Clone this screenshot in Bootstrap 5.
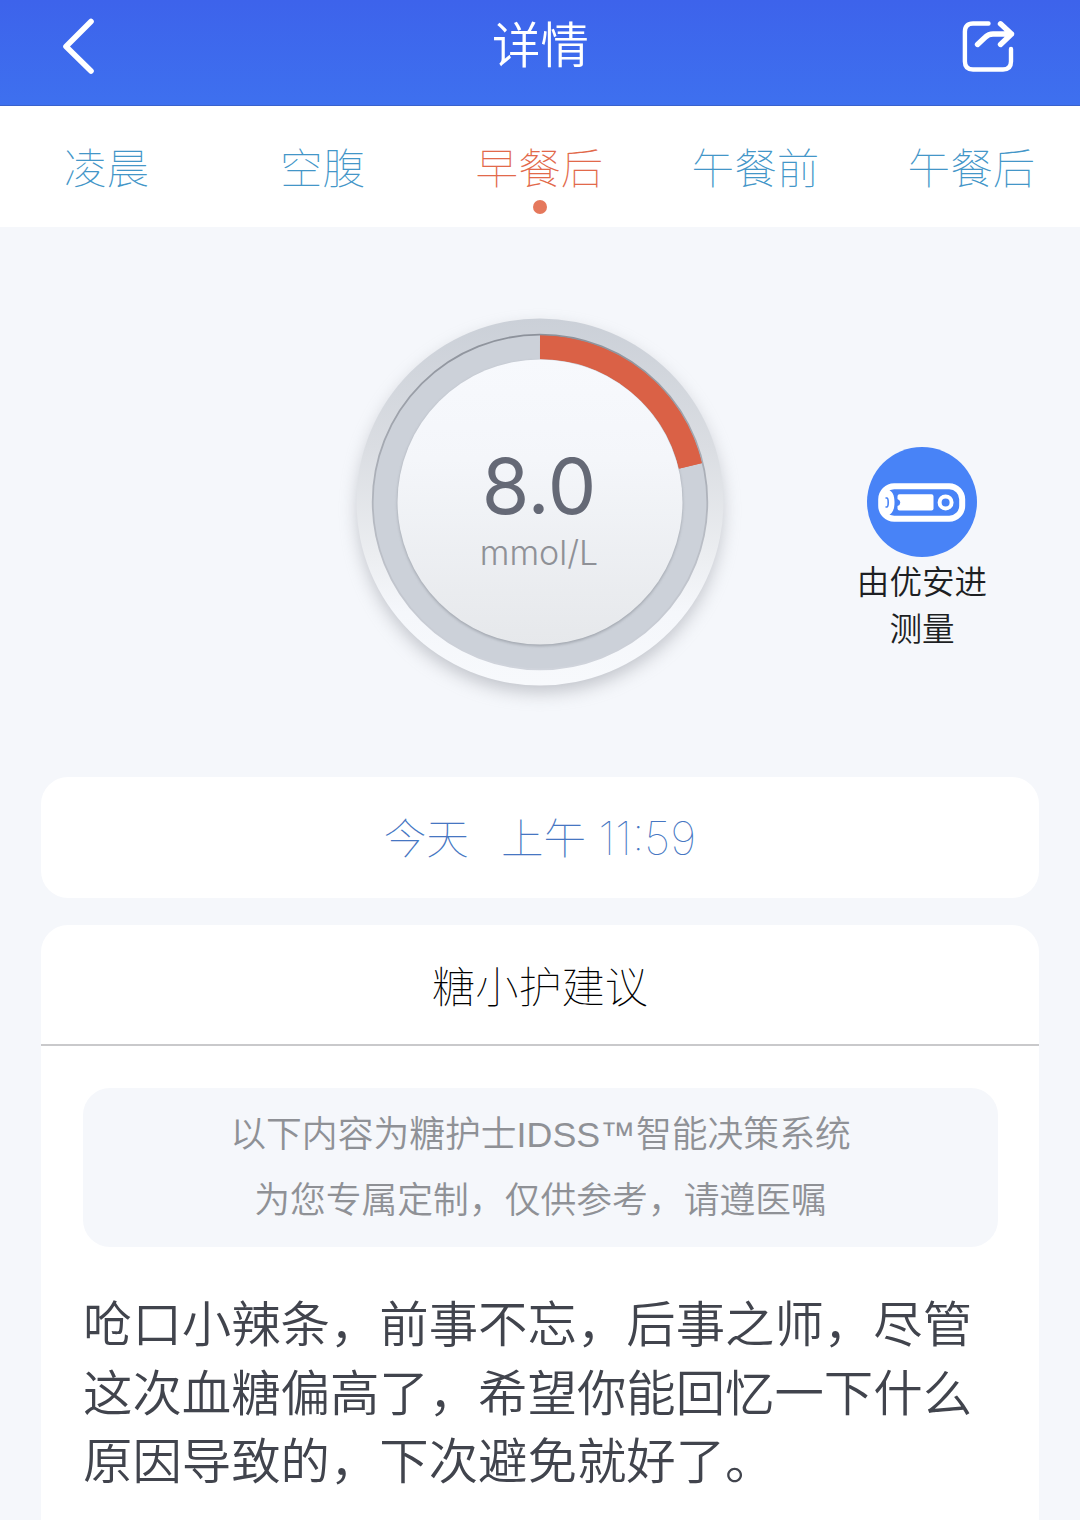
<!DOCTYPE html>
<html lang="zh-CN">
<head>
<meta charset="utf-8">
<meta name="viewport" content="width=device-width, initial-scale=1">
<title>详情</title>
<link rel="stylesheet" href="https://cdn.jsdelivr.net/npm/bootstrap@5.3.0/dist/css/bootstrap.min.css">
<style>
  body { background: #f5f7fb; font-family: Inter, "Noto Sans CJK SC", sans-serif; height: 1520px; overflow: hidden; }
  .topbar { height: 106px; padding: 0 64px 14px 62px; background: linear-gradient(#3d63eb, #3e70ef); border-bottom: 1px solid #3a62cc; }
  .topbar h1 { font-size: 48.4px; font-weight: 350; line-height: 60px; padding-left: 7px; margin-top: 1px; }
  .topbar svg { display: block; }
  .periods { height: 121px; }
  .periods a { width: 216px; height: 121px; padding: 32px 1px 0 0; font-size: 42.6px; line-height: 62px; font-weight: 100; color: #4396c8; text-decoration: none; white-space: nowrap; }
  .periods .short { padding-right: 3px; }
  .periods a.current { color: #e2694a; }
  .periods a.current::after { content: ""; width: 14px; height: 14px; margin: 0 -1px 0 0; border-radius: 50%; background: #e5785c; }
  .reading { height: 550px; }
  .device { width: 140px; margin: 220px 0 0 44px; font-size: 32.6px; line-height: 46.6px; font-weight: 350; color: #1d1f23; }
  .device svg { display: block; margin-bottom: 2px; }
  .panel { margin: 0 41px; background: #fff; border-radius: 27px; }
  .when { height: 121px; padding-top: 2px; font-size: 42.6px; font-weight: 100; color: #4676c2; }
  .when .day { margin-right: 32px; }
  .when .clock { margin-left: 12px; padding-bottom: 2px; font-size: 46px; line-height: 1; }
  .advice { margin-top: 27px; height: 640px; }
  .advice h2 { height: 121px; padding-top: 7px; border-bottom: 2px solid #c9c9cb; font-size: 43.2px; font-weight: 100; color: #000; }
  .notice { margin: 42px 41px 0 42px; height: 159px; border-radius: 27px; background: #f5f7fb; font-family: "Liberation Sans", "Noto Sans CJK SC", sans-serif; font-size: 35.8px; line-height: 66px; font-weight: 350; color: #8f9196; }
  .message { margin: 43px 0 0 42px; font-size: 49.4px; line-height: 68.7px; font-weight: 350; color: #41444d; white-space: nowrap; }
</style>
</head>
<body>
<header class="topbar d-flex align-items-center justify-content-between">
  <svg width="52" height="58" viewBox="0 0 52 58" fill="none" stroke="#fff" stroke-width="5.6" stroke-linecap="round" stroke-linejoin="round"><path d="M29 4.500 4 29.500 29 54"/></svg>
  <h1 class="mb-0 text-white">详情</h1>
  <svg width="56" height="56" viewBox="0 0 56 56" fill="none" stroke="#fff" stroke-width="4.400" stroke-linecap="round" stroke-linejoin="round"><path d="M28.500 5.500H13Q4.900 5.500 4.900 13.500V43.500Q4.900 51.500 13 51.500H43Q51 51.500 51 43.500V31"/><path stroke-width="5.400" d="M17.500 26.500 25.500 19Q28.500 16 33 16H51.500M40.500 5.800 51.500 16 40.500 26.500"/></svg>
</header>

<nav class="periods d-flex bg-white">
  <a class="short d-flex flex-column align-items-center flex-shrink-0" href="#">凌晨</a>
  <a class="short d-flex flex-column align-items-center flex-shrink-0" href="#">空腹</a>
  <a class="current d-flex flex-column align-items-center flex-shrink-0" href="#">早餐后</a>
  <a class="d-flex flex-column align-items-center flex-shrink-0" href="#">午餐前</a>
  <a class="d-flex flex-column align-items-center flex-shrink-0" href="#">午餐后</a>
</nav>

<section class="reading row g-0">
  <div class="col-4"></div>
  <div class="col-4 d-flex justify-content-center">
    <svg class="flex-shrink-0" width="420" height="550" viewBox="330 227 420 550">
      <defs>
        <linearGradient id="rim" x1="0" y1="0" x2="0" y2="1"><stop offset="0" stop-color="#cbd0d8"/><stop offset=".35" stop-color="#dadde2"/><stop offset=".65" stop-color="#eceef1"/><stop offset=".8" stop-color="#f5f7fb"/><stop offset="1" stop-color="#f7f9fc"/></linearGradient>
        <linearGradient id="dial" x1="0" y1="0" x2="0" y2="1"><stop offset="0" stop-color="#f7f9fd"/><stop offset=".35" stop-color="#f4f6fa"/><stop offset="1" stop-color="#e6e8eb"/></linearGradient>
        <linearGradient id="edge" x1="0" y1="0" x2="0" y2="1"><stop offset="0" stop-color="#8d929b"/><stop offset=".6" stop-color="#b8bcc4"/><stop offset="1" stop-color="#d0d4dc"/></linearGradient>
        <filter id="soft" x="-20%" y="-20%" width="140%" height="140%"><feGaussianBlur stdDeviation="9"/></filter>
        <filter id="tight" x="-20%" y="-20%" width="140%" height="140%"><feGaussianBlur stdDeviation="1.500"/></filter>
      </defs>
      <circle cx="540" cy="510" r="182" fill="#8b8f98" opacity=".5" filter="url(#soft)"/>
      <circle cx="540" cy="502" r="183.500" fill="url(#rim)"/>
      <circle cx="540" cy="502" r="167.500" fill="#ccd1d9"/>
      <path d="M540 347A155 155 0 0 1 690.700 465.800" fill="none" stroke="#da6146" stroke-width="24.500"/>
      <circle cx="540" cy="502" r="167.300" fill="none" stroke="url(#edge)" stroke-width="1.800"/>
      <circle cx="540" cy="503.500" r="142.500" fill="#80858e" opacity=".6" filter="url(#tight)"/>
      <path d="M540 347A155 155 0 0 1 690.700 465.800" fill="none" stroke="#da6146" stroke-width="23"/>
      <circle cx="540" cy="502" r="142.500" fill="url(#dial)"/>
      <text x="539" y="514" text-anchor="middle" font-size="77" font-weight="370" fill="#656976">8.0</text>
      <text x="539" y="565" text-anchor="middle" font-size="34" font-weight="300" fill="#8f9197">mmol/L</text>
    </svg>
  </div>
  <div class="col-4 d-flex justify-content-center">
    <div class="device d-flex flex-column align-items-center text-center">
      <svg width="110" height="110" viewBox="0 0 110 110"><circle cx="55" cy="55" r="55" fill="#4883f7"/><rect x="14.200" y="39.200" width="81" height="32.500" rx="13" fill="none" stroke="#fff" stroke-width="6"/><path d="M16 42.500h4.500c4.500 1 7 5.500 7 13s-2.500 12-7 13H16z" fill="#fff"/><path d="M18.500 51h1.200q1.500 0 1.500 4.500t-1.500 4.500h-1.200" fill="none" stroke="#4883f7" stroke-width="1.600"/><path d="M32.500 47.200H64.500q2 0 2 2v12.300q0 2-2 2H32.500q-2 0-2-2v-2.500q2.800-1 2.800-3.500t-2.800-3.500v-2.800q0-2 2-2z" fill="#fff"/><circle cx="78.600" cy="55.400" r="6" fill="none" stroke="#fff" stroke-width="4"/></svg>
      <div class="text-nowrap">由优安进<br>测量</div>
    </div>
  </div>
</section>

<section class="panel when d-flex align-items-center justify-content-center"><span class="day">今天</span><span>上午</span><span class="clock">11:59</span></section>

<section class="panel advice overflow-hidden">
  <h2 class="m-0 d-flex align-items-center justify-content-center">糖小护建议</h2>
  <div class="notice d-flex flex-column align-items-center justify-content-center">
    <div>以下内容为糖护士IDSS™智能决策系统</div>
    <div>为您专属定制，仅供参考，请遵医嘱</div>
  </div>
  <p class="message mb-0">呛口小辣条，前事不忘，后事之师，尽管<br>这次血糖偏高了，希望你能回忆一下什么<br>原因导致的，下次避免就好了。</p>
</section>
<script src="https://cdn.jsdelivr.net/npm/bootstrap@5.3.0/dist/js/bootstrap.bundle.min.js"></script>
</body>
</html>
